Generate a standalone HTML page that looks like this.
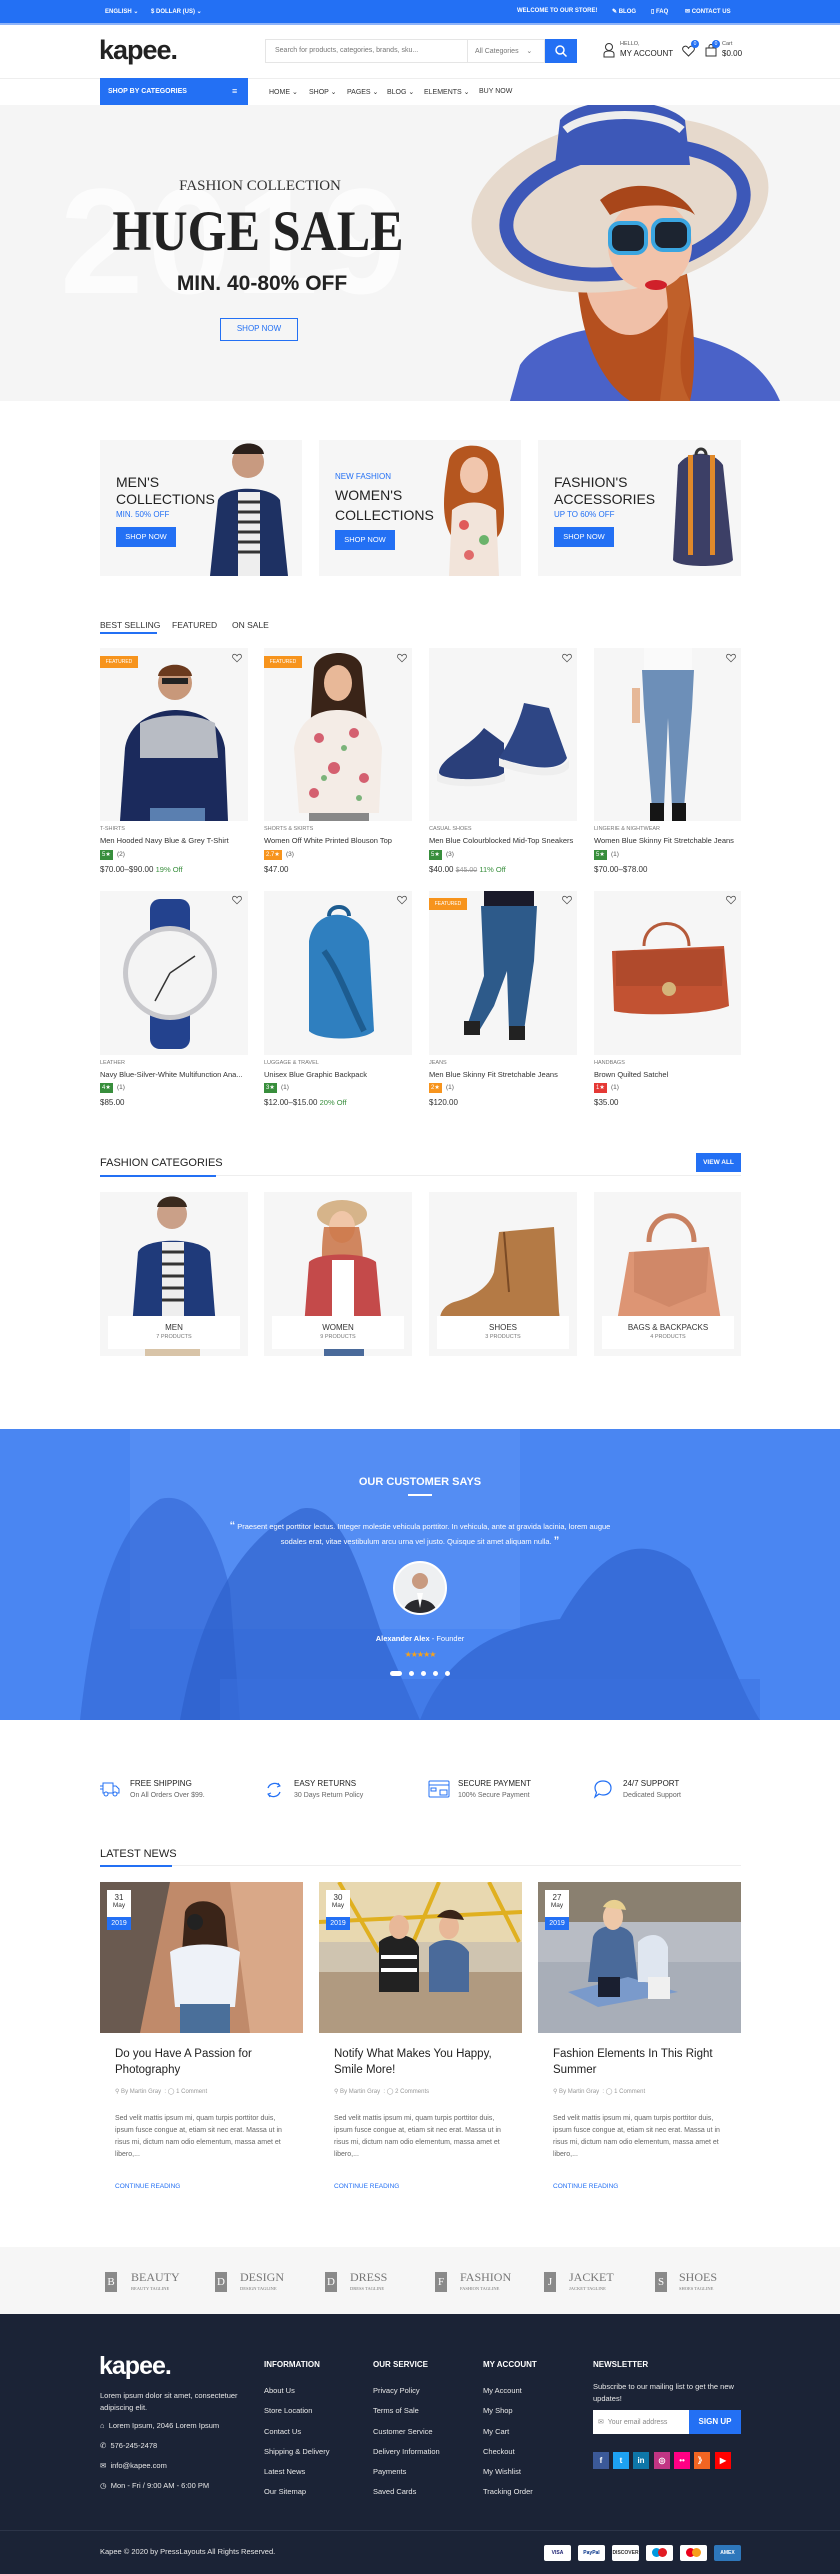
<!DOCTYPE html>
<html><head><meta charset="utf-8">
<style>
*{margin:0;padding:0;box-sizing:border-box}
body{width:840px;height:2574px;position:relative;font-family:"Liberation Sans",sans-serif;color:#333;background:#fff;overflow:hidden}
.a{position:absolute}
.blue{background:#2370f4}
.tb{font-size:6px;color:#fff;font-weight:bold;top:8px}
.nav{font-size:7px;top:88px;color:#333}
.ph{background:#f6f6f6;overflow:hidden}
.cat{font-size:5.5px;color:#777}
.nm{font-size:7.5px;color:#333;white-space:nowrap}
.rt{font-size:6px;color:#fff;padding:1px 2px;height:10px;line-height:8px}
.rc{font-size:6.5px;color:#555}
.pr{font-size:8px;color:#333}
.off{color:#388e3c;font-size:7.5px}
.heart{width:10px;height:10px}
.fh{font-size:8px;font-weight:bold;color:#fff;top:2360px}
.fl{font-size:7.5px;color:#e8e8e8}
.soc{width:16px;height:17px;top:2452px;color:#fff;font-size:8px;text-align:center;line-height:17px;font-weight:bold}
.pay{width:27px;height:16px;top:2545px;background:#fff;border-radius:2px;font-size:5px;text-align:center;line-height:16px;font-weight:bold}
.br{font-family:"Liberation Serif",serif;color:#777}
.brb{width:12px;height:20px;background:#8a8a8a;color:#fff;font-size:11px;text-align:center;line-height:20px;top:2272px;font-family:"Liberation Serif",serif}
.brt{font-size:12px;top:2270px}
.brs{font-size:4.5px;top:2286px}
.ntitle{font-size:11.5px;color:#222;line-height:16px;width:180px}
.nmeta{font-size:6px;color:#999;top:2088px}
.nex{font-size:7px;color:#666;line-height:12px;top:2113px;width:175px}
.ncr{font-size:6.5px;color:#2370f4;top:2183px}
.dt{width:24px;top:1890px;height:39px;text-align:center}
</style></head><body>

<!-- top bar -->
<div class="a blue" style="left:0;top:0;width:840px;height:23px"></div>
<div class="a" style="left:0;top:23px;width:840px;height:2px;background:#8fb4f8"></div>
<div class="a tb" style="left:105px">ENGLISH ⌄</div>
<div class="a tb" style="left:151px">$ DOLLAR (US) ⌄</div>
<div class="a tb" style="left:517px">WELCOME TO OUR STORE!</div>
<div class="a tb" style="left:612px">✎ BLOG</div>
<div class="a tb" style="left:651px">▯ FAQ</div>
<div class="a tb" style="left:685px">✉ CONTACT US</div>

<!-- header -->
<div class="a" style="left:99px;top:35px;font-size:27px;font-weight:bold;color:#222;letter-spacing:-1px">kapee.</div>
<div class="a" style="left:265px;top:39px;width:280px;height:24px;border:1px solid #e5e5e5"></div>
<div class="a" style="left:275px;top:47px;font-size:7px;color:#777">Search for products, categories, brands, sku...</div>
<div class="a" style="left:467px;top:39px;width:1px;height:24px;background:#e5e5e5"></div>
<div class="a" style="left:475px;top:47px;font-size:7px;color:#777">All Categories &nbsp;&nbsp;&nbsp;⌄</div>
<div class="a blue" style="left:545px;top:39px;width:32px;height:24px"></div>
<svg class="a" style="left:554px;top:44px" width="14" height="14" viewBox="0 0 14 14"><circle cx="6" cy="6" r="4" fill="none" stroke="#fff" stroke-width="1.5"/><line x1="9" y1="9" x2="12.5" y2="12.5" stroke="#fff" stroke-width="1.5"/></svg>
<svg class="a" style="left:603px;top:42px" width="12" height="16" viewBox="0 0 12 16"><circle cx="6" cy="5" r="3.5" fill="none" stroke="#333"/><path d="M1 15v-3c0-2 2-3 5-3s5 1 5 3v3z" fill="none" stroke="#333"/></svg>
<div class="a" style="left:620px;top:41px;font-size:5.5px;color:#555">HELLO,</div>
<div class="a" style="left:620px;top:49px;font-size:8px;color:#222">MY ACCOUNT</div>
<svg class="a" style="left:682px;top:45px" width="13" height="12" viewBox="0 0 13 12"><path d="M6.5 11L1.5 6C0 4.5 0.5 1.5 3 1.2 4.8 1 6 2.5 6.5 3.3 7 2.5 8.2 1 10 1.2 12.5 1.5 13 4.5 11.5 6z" fill="none" stroke="#333"/></svg>
<div class="a blue" style="left:691px;top:40px;width:8px;height:8px;border-radius:50%;font-size:5px;color:#fff;text-align:center;line-height:8px">0</div>
<svg class="a" style="left:705px;top:44px" width="12" height="13" viewBox="0 0 12 13"><rect x="1" y="4" width="10" height="8" fill="none" stroke="#333"/><path d="M4 4V2.5a2 2 0 014 0V4" fill="none" stroke="#333"/></svg>
<div class="a blue" style="left:712px;top:40px;width:8px;height:8px;border-radius:50%;font-size:5px;color:#fff;text-align:center;line-height:8px">0</div>
<div class="a" style="left:722px;top:41px;font-size:5.5px;color:#555">Cart</div>
<div class="a" style="left:722px;top:49px;font-size:8px;color:#222">$0.00</div>

<!-- nav -->
<div class="a" style="left:0;top:78px;width:840px;height:1px;background:#eee"></div>
<div class="a blue" style="left:100px;top:78px;width:148px;height:27px"></div>
<div class="a" style="left:108px;top:88px;font-size:7px;font-weight:bold;color:#fff">SHOP BY CATEGORIES</div>
<div class="a" style="left:232px;top:87px;font-size:9px;color:#fff;line-height:8px">≡</div>
<div class="a nav" style="left:269px">HOME ⌄</div>
<div class="a nav" style="left:309px">SHOP ⌄</div>
<div class="a nav" style="left:347px">PAGES ⌄</div>
<div class="a nav" style="left:387px">BLOG ⌄</div>
<div class="a nav" style="left:424px">ELEMENTS ⌄</div>
<div class="a nav" style="left:479px">BUY NOW</div>

<!-- hero -->
<div class="a" style="left:0;top:105px;width:840px;height:296px;background:#f5f5f5;overflow:hidden">
 <div class="a" style="left:60px;top:50px;font-family:'Liberation Sans',sans-serif;font-size:150px;font-weight:bold;color:#fcfcfc;letter-spacing:4px">2019</div>
 <div class="a" style="left:0;top:73px;width:520px;text-align:center;font-family:'Liberation Serif',serif;font-size:15px;color:#333">FASHION COLLECTION</div>
 <div class="a" style="left:0;top:97px;width:516px;text-align:center;font-family:'Liberation Serif',serif;font-size:57px;font-weight:bold;color:#222;line-height:60px;transform:scaleX(0.88);transform-origin:258px 0">HUGE SALE</div>
 <div class="a" style="left:0;top:167px;width:524px;text-align:center;font-size:21px;font-weight:bold;color:#222">MIN. 40-80% OFF</div>
 <div class="a" style="left:220px;top:213px;width:78px;height:23px;border:1.5px solid #2370f4;color:#2370f4;font-size:8px;text-align:center;line-height:20px">SHOP NOW</div>
 <svg class="a" style="left:460px;top:0" width="340" height="296" viewBox="0 0 340 296">
  <path d="M60 260 C80 230 140 215 200 225 C260 235 300 250 320 296 L50 296 Z" fill="#4a62c8"/>
  <path d="M120 130 C110 200 130 270 170 296 L230 296 C240 250 230 180 220 130Z" fill="#b5501f"/>
  <ellipse cx="170" cy="170" rx="45" ry="60" fill="#f0c0a8"/>
  <path d="M130 120 C150 150 200 160 220 130 L230 200 C220 240 215 270 230 296 L200 296 C205 250 215 200 200 160Z" fill="#c0602a"/>
  <ellipse cx="160" cy="100" rx="150" ry="85" transform="rotate(-10 160 100)" fill="#e6d9cc"/>
  <ellipse cx="165" cy="105" rx="120" ry="62" transform="rotate(-10 165 105)" fill="none" stroke="#3d58b8" stroke-width="14"/>
  <path d="M100 15 C120 -10 200 -10 225 15 L230 60 L95 60Z" fill="#3d58b8"/>
  <path d="M105 25 C130 5 200 5 222 25" fill="none" stroke="#eee" stroke-width="8"/>
  <ellipse cx="190" cy="140" rx="42" ry="45" fill="#f2c3aa"/>
  <path d="M140 95 C170 70 220 80 235 110 C225 100 180 95 150 110Z" fill="#a8461a"/>
  <rect x="150" y="118" width="36" height="30" rx="10" fill="#1c2430" stroke="#3aa5e0" stroke-width="4"/>
  <rect x="193" y="115" width="36" height="30" rx="10" fill="#1c2430" stroke="#3aa5e0" stroke-width="4"/>
  <ellipse cx="196" cy="180" rx="11" ry="5" fill="#d0202a"/>
 </svg>
</div>

<!-- banners -->
<div class="a ph" style="left:100px;top:440px;width:202px;height:136px">
 <svg class="a" style="left:100px;top:0" width="100" height="136" viewBox="0 0 100 136"><circle cx="48" cy="22" r="16" fill="#c89a80"/><path d="M32 14c4-14 30-14 32 0z" fill="#2a1f1a"/><path d="M10 136 L18 60 C25 45 70 45 80 60 L88 136Z" fill="#1e3163"/><rect x="38" y="52" width="22" height="84" fill="#eee"/><g stroke="#333" stroke-width="3"><line x1="38" y1="62" x2="60" y2="62"/><line x1="38" y1="72" x2="60" y2="72"/><line x1="38" y1="82" x2="60" y2="82"/><line x1="38" y1="92" x2="60" y2="92"/><line x1="38" y1="102" x2="60" y2="102"/><line x1="38" y1="112" x2="60" y2="112"/></g></svg>
 <div class="a" style="left:16px;top:34px;font-size:14px;color:#222;line-height:17px">MEN'S<br>COLLECTIONS</div>
 <div class="a" style="left:16px;top:70px;font-size:8px;color:#2370f4">MIN. 50% OFF</div>
 <div class="a blue" style="left:16px;top:87px;width:60px;height:20px;color:#fff;font-size:7.5px;text-align:center;line-height:20px">SHOP NOW</div>
</div>
<div class="a ph" style="left:319px;top:440px;width:202px;height:136px">
 <svg class="a" style="left:105px;top:0" width="95" height="136" viewBox="0 0 95 136"><path d="M25 20 C30 0 70 0 75 25 C80 60 85 90 70 100 L30 100 C15 80 20 50 25 20Z" fill="#b5561f"/><ellipse cx="50" cy="35" rx="14" ry="18" fill="#f1c6ad"/><path d="M28 70 C40 60 60 60 72 70 L75 136 L25 136Z" fill="#f2e4da"/><circle cx="40" cy="85" r="5" fill="#e05a5a"/><circle cx="60" cy="100" r="5" fill="#6bb36b"/><circle cx="45" cy="115" r="5" fill="#e06a6a"/></svg>
 <div class="a" style="left:16px;top:32px;font-size:8px;color:#2370f4">NEW FASHION</div>
 <div class="a" style="left:16px;top:45px;font-size:14px;color:#222;line-height:20px">WOMEN'S<br>COLLECTIONS</div>
 <div class="a blue" style="left:16px;top:90px;width:60px;height:20px;color:#fff;font-size:7.5px;text-align:center;line-height:20px">SHOP NOW</div>
</div>
<div class="a ph" style="left:538px;top:440px;width:203px;height:136px">
 <svg class="a" style="left:110px;top:0" width="93" height="136" viewBox="0 0 93 136"><path d="M30 25 C40 10 65 10 75 25 L85 120 C80 128 30 128 25 120Z" fill="#3c3f66"/><rect x="40" y="15" width="5" height="100" fill="#e0892a"/><rect x="62" y="15" width="5" height="100" fill="#e0892a"/><path d="M48 15 c0-8 10-8 10 0" fill="none" stroke="#333" stroke-width="3"/></svg>
 <div class="a" style="left:16px;top:34px;font-size:14px;color:#222;line-height:17px">FASHION'S<br>ACCESSORIES</div>
 <div class="a" style="left:16px;top:70px;font-size:8px;color:#2370f4">UP TO 60% OFF</div>
 <div class="a blue" style="left:16px;top:87px;width:60px;height:20px;color:#fff;font-size:7.5px;text-align:center;line-height:20px">SHOP NOW</div>
</div>

<!-- tabs -->
<div class="a" style="left:100px;top:620px;font-size:8.5px;color:#333">BEST SELLING</div>
<div class="a" style="left:100px;top:632px;width:57px;height:2px;background:#2370f4"></div>
<div class="a" style="left:172px;top:620px;font-size:8.5px;color:#333">FEATURED</div>
<div class="a" style="left:232px;top:620px;font-size:8.5px;color:#333">ON SALE</div>

<!-- products row 1 -->
<div class="a ph" style="left:100px;top:648px;width:148px;height:173px"><svg width="148" height="173" viewBox="0 0 148 173"><circle cx="75" cy="35" r="17" fill="#c8987a"/><path d="M58 28c2-15 32-15 34 0z" fill="#6b3a1e"/><rect x="62" y="30" width="26" height="6" fill="#222"/><path d="M20 173 L25 100 C30 70 60 62 75 62 C95 62 120 70 125 100 L128 173Z" fill="#1b2a5c"/><path d="M40 75 C60 65 95 65 115 75 L118 110 L40 110Z" fill="#b8bcc4"/><rect x="50" y="160" width="55" height="13" fill="#5a7fb0"/></svg></div>
<div class="a ph" style="left:264px;top:648px;width:148px;height:173px"><svg width="148" height="173" viewBox="0 0 148 173"><path d="M50 20 C55 0 95 0 98 20 L105 100 L45 100Z" fill="#3a2418"/><ellipse cx="74" cy="35" rx="14" ry="18" fill="#e8b898"/><path d="M30 100 C35 70 55 62 74 62 C95 62 112 70 118 100 L115 165 L35 165Z" fill="#f4ece6"/><g fill="#d46070"><circle cx="55" cy="90" r="5"/><circle cx="90" cy="85" r="5"/><circle cx="70" cy="120" r="6"/><circle cx="100" cy="130" r="5"/><circle cx="50" cy="145" r="5"/></g><g fill="#7bb37a"><circle cx="80" cy="100" r="3"/><circle cx="60" cy="130" r="3"/><circle cx="95" cy="150" r="3"/></g><rect x="45" y="165" width="60" height="8" fill="#888"/></svg></div>
<div class="a ph" style="left:429px;top:648px;width:148px;height:173px"><svg width="148" height="173" viewBox="0 0 148 173"><path d="M10 125 C10 110 40 100 55 80 L75 95 L75 125 C60 135 20 138 10 125Z" fill="#2a3f7a"/><path d="M8 125 C20 134 60 132 76 126 L76 133 C60 140 20 140 8 133Z" fill="#eee"/><path d="M70 110 C80 95 90 75 95 55 L120 60 L138 110 C130 125 100 120 70 110Z" fill="#2e4685"/><path d="M70 110 C100 122 130 125 140 112 L140 120 C130 132 100 128 70 118Z" fill="#eee"/></svg></div>
<div class="a ph" style="left:594px;top:648px;width:147px;height:173px"><svg width="147" height="173" viewBox="0 0 147 173"><rect x="50" y="0" width="48" height="22" fill="#fafafa"/><path d="M48 22 L100 22 L98 60 L90 160 L78 160 L74 70 L70 160 L58 160 L50 60Z" fill="#6d8fb8"/><rect x="56" y="155" width="14" height="18" fill="#151515"/><rect x="78" y="155" width="14" height="18" fill="#151515"/><rect x="38" y="40" width="8" height="35" fill="#e6b898"/></svg></div>

<svg class="a heart" style="left:232px;top:653px" viewBox="0 0 13 12"><path d="M6.5 11L1.5 6C0 4.5 0.5 1.5 3 1.2 4.8 1 6 2.5 6.5 3.3 7 2.5 8.2 1 10 1.2 12.5 1.5 13 4.5 11.5 6z" fill="none" stroke="#555"/></svg>
<svg class="a heart" style="left:397px;top:653px" viewBox="0 0 13 12"><path d="M6.5 11L1.5 6C0 4.5 0.5 1.5 3 1.2 4.8 1 6 2.5 6.5 3.3 7 2.5 8.2 1 10 1.2 12.5 1.5 13 4.5 11.5 6z" fill="none" stroke="#555"/></svg>
<svg class="a heart" style="left:562px;top:653px" viewBox="0 0 13 12"><path d="M6.5 11L1.5 6C0 4.5 0.5 1.5 3 1.2 4.8 1 6 2.5 6.5 3.3 7 2.5 8.2 1 10 1.2 12.5 1.5 13 4.5 11.5 6z" fill="none" stroke="#555"/></svg>
<svg class="a heart" style="left:726px;top:653px" viewBox="0 0 13 12"><path d="M6.5 11L1.5 6C0 4.5 0.5 1.5 3 1.2 4.8 1 6 2.5 6.5 3.3 7 2.5 8.2 1 10 1.2 12.5 1.5 13 4.5 11.5 6z" fill="none" stroke="#555"/></svg>
<div class="a" style="left:100px;top:656px;width:38px;height:12px;background:#f7941d;color:#fff;font-size:5px;text-align:center;line-height:12px">FEATURED</div>
<div class="a" style="left:264px;top:656px;width:38px;height:12px;background:#f7941d;color:#fff;font-size:5px;text-align:center;line-height:12px">FEATURED</div>

<div class="a cat" style="left:100px;top:826px">T-SHIRTS</div>
<div class="a cat" style="left:264px;top:826px">SHORTS &amp; SKIRTS</div>
<div class="a cat" style="left:429px;top:826px">CASUAL SHOES</div>
<div class="a cat" style="left:594px;top:826px">LINGERIE &amp; NIGHTWEAR</div>
<div class="a nm" style="left:100px;top:836px">Men Hooded Navy Blue &amp; Grey T-Shirt</div>
<div class="a nm" style="left:264px;top:836px">Women Off White Printed Blouson Top</div>
<div class="a nm" style="left:429px;top:836px">Men Blue Colourblocked Mid-Top Sneakers</div>
<div class="a nm" style="left:594px;top:836px">Women Blue Skinny Fit Stretchable Jeans</div>
<div class="a rt" style="left:100px;top:850px;background:#388e3c">5★</div><div class="a rc" style="left:117px;top:851px">(2)</div>
<div class="a rt" style="left:264px;top:850px;background:#f7941d">2.7★</div><div class="a rc" style="left:286px;top:851px">(3)</div>
<div class="a rt" style="left:429px;top:850px;background:#388e3c">5★</div><div class="a rc" style="left:446px;top:851px">(3)</div>
<div class="a rt" style="left:594px;top:850px;background:#388e3c">5★</div><div class="a rc" style="left:611px;top:851px">(1)</div>
<div class="a pr" style="left:100px;top:865px">$70.00–$90.00 <span class="off">19% Off</span></div>
<div class="a pr" style="left:264px;top:865px">$47.00</div>
<div class="a pr" style="left:429px;top:865px">$40.00 <s style="color:#999;font-size:7px">$45.00</s> <span class="off">11% Off</span></div>
<div class="a pr" style="left:594px;top:865px">$70.00–$78.00</div>

<!-- products row 2 -->
<div class="a ph" style="left:100px;top:891px;width:148px;height:164px"><svg width="148" height="164" viewBox="0 0 148 164"><rect x="50" y="8" width="40" height="150" rx="10" fill="#23428e"/><circle cx="70" cy="82" r="47" fill="#c8c8cc"/><circle cx="70" cy="82" r="42" fill="#f4f4f4"/><line x1="70" y1="82" x2="55" y2="110" stroke="#333" stroke-width="1.5"/><line x1="70" y1="82" x2="95" y2="65" stroke="#333" stroke-width="1.5"/></svg></div>
<div class="a ph" style="left:264px;top:891px;width:148px;height:164px"><svg width="148" height="164" viewBox="0 0 148 164"><path d="M45 50 C50 15 95 15 105 50 L110 140 C100 150 55 150 45 140Z" fill="#2f7fbf"/><path d="M60 60 C75 80 85 110 100 140" stroke="#1d5c90" stroke-width="6" fill="none"/><path d="M65 25 c0-12 20-12 20 0" fill="none" stroke="#1d5c90" stroke-width="4"/></svg></div>
<div class="a ph" style="left:429px;top:891px;width:148px;height:164px"><svg width="148" height="164" viewBox="0 0 148 164"><rect x="55" y="0" width="50" height="20" fill="#1a1a2a"/><path d="M52 15 L108 15 L105 70 L95 140 L80 140 L78 80 L65 115 L50 140 L38 135 L55 85Z" fill="#2d5a8a"/><rect x="35" y="130" width="16" height="14" fill="#222"/><rect x="80" y="135" width="16" height="14" fill="#222"/></svg></div>
<div class="a ph" style="left:594px;top:891px;width:147px;height:164px"><svg width="147" height="164" viewBox="0 0 147 164"><path d="M50 55 c0-30 45-30 45 0" fill="none" stroke="#b55a3a" stroke-width="3"/><path d="M18 60 L130 55 L135 115 C110 125 40 125 20 120Z" fill="#c25232"/><path d="M22 60 L130 58 L128 95 L22 95Z" fill="#b04a2c"/><circle cx="75" cy="98" r="7" fill="#d4b47a"/></svg></div>
<svg class="a heart" style="left:232px;top:895px" viewBox="0 0 13 12"><path d="M6.5 11L1.5 6C0 4.5 0.5 1.5 3 1.2 4.8 1 6 2.5 6.5 3.3 7 2.5 8.2 1 10 1.2 12.5 1.5 13 4.5 11.5 6z" fill="none" stroke="#555"/></svg>
<svg class="a heart" style="left:397px;top:895px" viewBox="0 0 13 12"><path d="M6.5 11L1.5 6C0 4.5 0.5 1.5 3 1.2 4.8 1 6 2.5 6.5 3.3 7 2.5 8.2 1 10 1.2 12.5 1.5 13 4.5 11.5 6z" fill="none" stroke="#555"/></svg>
<svg class="a heart" style="left:562px;top:895px" viewBox="0 0 13 12"><path d="M6.5 11L1.5 6C0 4.5 0.5 1.5 3 1.2 4.8 1 6 2.5 6.5 3.3 7 2.5 8.2 1 10 1.2 12.5 1.5 13 4.5 11.5 6z" fill="none" stroke="#555"/></svg>
<svg class="a heart" style="left:726px;top:895px" viewBox="0 0 13 12"><path d="M6.5 11L1.5 6C0 4.5 0.5 1.5 3 1.2 4.8 1 6 2.5 6.5 3.3 7 2.5 8.2 1 10 1.2 12.5 1.5 13 4.5 11.5 6z" fill="none" stroke="#555"/></svg>
<div class="a" style="left:429px;top:898px;width:38px;height:12px;background:#f7941d;color:#fff;font-size:5px;text-align:center;line-height:12px">FEATURED</div>

<div class="a cat" style="left:100px;top:1060px">LEATHER</div>
<div class="a cat" style="left:264px;top:1060px">LUGGAGE &amp; TRAVEL</div>
<div class="a cat" style="left:429px;top:1060px">JEANS</div>
<div class="a cat" style="left:594px;top:1060px">HANDBAGS</div>
<div class="a nm" style="left:100px;top:1070px">Navy Blue-Silver-White Multifunction Ana...</div>
<div class="a nm" style="left:264px;top:1070px">Unisex Blue Graphic Backpack</div>
<div class="a nm" style="left:429px;top:1070px">Men Blue Skinny Fit Stretchable Jeans</div>
<div class="a nm" style="left:594px;top:1070px">Brown Quilted Satchel</div>
<div class="a rt" style="left:100px;top:1083px;background:#388e3c">4★</div><div class="a rc" style="left:117px;top:1084px">(1)</div>
<div class="a rt" style="left:264px;top:1083px;background:#388e3c">3★</div><div class="a rc" style="left:281px;top:1084px">(1)</div>
<div class="a rt" style="left:429px;top:1083px;background:#f7941d">2★</div><div class="a rc" style="left:446px;top:1084px">(1)</div>
<div class="a rt" style="left:594px;top:1083px;background:#e53935">1★</div><div class="a rc" style="left:611px;top:1084px">(1)</div>
<div class="a pr" style="left:100px;top:1098px">$85.00</div>
<div class="a pr" style="left:264px;top:1098px">$12.00–$15.00 <span class="off">20% Off</span></div>
<div class="a pr" style="left:429px;top:1098px">$120.00</div>
<div class="a pr" style="left:594px;top:1098px">$35.00</div>

<!-- fashion categories -->
<div class="a" style="left:100px;top:1157px;font-size:11px;color:#222">FASHION CATEGORIES</div>
<div class="a" style="left:100px;top:1175px;width:641px;height:1px;background:#eee"></div>
<div class="a" style="left:100px;top:1175px;width:116px;height:2px;background:#2370f4"></div>
<div class="a blue" style="left:696px;top:1153px;width:45px;height:19px;color:#fff;font-size:6.5px;font-weight:bold;text-align:center;line-height:19px">VIEW ALL</div>

<div class="a ph" style="left:100px;top:1192px;width:148px;height:164px"><svg width="148" height="164" viewBox="0 0 148 164"><circle cx="72" cy="22" r="15" fill="#caa088"/><path d="M57 15c2-14 28-14 30 0z" fill="#3a2a1e"/><path d="M32 135 L38 60 C45 45 100 45 110 60 L116 135Z" fill="#1f3a7a"/><rect x="62" y="50" width="22" height="85" fill="#eee"/><g stroke="#333" stroke-width="3"><line x1="62" y1="60" x2="84" y2="60"/><line x1="62" y1="72" x2="84" y2="72"/><line x1="62" y1="84" x2="84" y2="84"/><line x1="62" y1="96" x2="84" y2="96"/><line x1="62" y1="108" x2="84" y2="108"/></g><rect x="45" y="135" width="55" height="29" fill="#d8c4a8"/></svg></div>
<div class="a ph" style="left:264px;top:1192px;width:148px;height:164px"><svg width="148" height="164" viewBox="0 0 148 164"><ellipse cx="78" cy="22" rx="25" ry="14" fill="#d6b48a"/><ellipse cx="78" cy="35" rx="13" ry="16" fill="#f0c6a8"/><path d="M60 35 C55 70 60 90 65 95 L95 95 C100 80 100 60 95 35Z" fill="#c76a3a" opacity=".8"/><path d="M40 135 L45 70 C55 60 100 60 112 70 L118 135Z" fill="#c44a4a"/><rect x="68" y="68" width="22" height="60" fill="#fff"/><rect x="60" y="135" width="40" height="29" fill="#4a6a9a"/></svg></div>
<div class="a ph" style="left:429px;top:1192px;width:148px;height:164px"><svg width="148" height="164" viewBox="0 0 148 164"><path d="M70 40 L125 35 L130 120 C132 130 128 135 120 135 L15 135 C8 130 10 115 25 110 C45 105 60 95 65 80Z" fill="#b47a45"/><rect x="10" y="128" width="122" height="8" fill="#6a4a30"/><path d="M75 40 L80 100" stroke="#7a4a25" stroke-width="2"/></svg></div>
<div class="a ph" style="left:594px;top:1192px;width:147px;height:164px"><svg width="147" height="164" viewBox="0 0 147 164"><path d="M55 50 C55 15 100 15 100 50" fill="none" stroke="#c88060" stroke-width="5"/><path d="M35 60 L115 55 L128 135 L22 135Z" fill="#dd9574"/><path d="M40 60 L115 55 L112 100 L75 115 L40 100Z" fill="#d08868"/></svg></div>
<div class="a" style="left:108px;top:1316px;width:132px;height:33px;background:#fff;text-align:center"><div style="font-size:8px;margin-top:7px">MEN</div><div style="font-size:5.5px;color:#777;margin-top:2px">7 PRODUCTS</div></div>
<div class="a" style="left:272px;top:1316px;width:132px;height:33px;background:#fff;text-align:center"><div style="font-size:8px;margin-top:7px">WOMEN</div><div style="font-size:5.5px;color:#777;margin-top:2px">9 PRODUCTS</div></div>
<div class="a" style="left:437px;top:1316px;width:132px;height:33px;background:#fff;text-align:center"><div style="font-size:8px;margin-top:7px">SHOES</div><div style="font-size:5.5px;color:#777;margin-top:2px">3 PRODUCTS</div></div>
<div class="a" style="left:602px;top:1316px;width:132px;height:33px;background:#fff;text-align:center"><div style="font-size:8px;margin-top:7px">BAGS &amp; BACKPACKS</div><div style="font-size:5.5px;color:#777;margin-top:2px">4 PRODUCTS</div></div>

<!-- testimonial -->
<div class="a" style="left:0;top:1429px;width:840px;height:291px;background:#4a86f2;overflow:hidden">
 <svg width="840" height="291" viewBox="0 0 840 291">
  <rect x="0" y="0" width="840" height="291" fill="#4a86f2"/>
  <rect x="130" y="0" width="390" height="200" fill="#5b92f3" opacity=".6"/>
  <path d="M80 291 C90 200 110 100 160 70 C200 60 220 120 230 160 L240 291Z" fill="#2f63d0" opacity=".55"/>
  <path d="M180 291 C200 180 240 110 300 80 C340 70 360 140 380 200 L420 291Z" fill="#2c5ec8" opacity=".6"/>
  <path d="M420 291 C440 240 480 200 560 190 C600 120 640 100 690 140 C720 200 740 260 760 291Z" fill="#2c5ec8" opacity=".6"/>
  <rect x="220" y="250" width="540" height="41" fill="#3a70de" opacity=".5"/>
 </svg>
</div>
<div class="a" style="left:0;top:1476px;width:840px;text-align:center;font-size:11px;font-weight:bold;color:#fff">OUR CUSTOMER SAYS</div>
<div class="a" style="left:408px;top:1494px;width:24px;height:2px;background:#fff"></div>
<div class="a" style="left:0;top:1519px;width:840px;text-align:center;font-size:7.5px;color:#fff;line-height:15px"><b style="font-size:11px">“</b> Praesent eget porttitor lectus. Integer molestie vehicula porttitor. In vehicula, ante at gravida lacinia, lorem augue<br>sodales erat, vitae vestibulum arcu urna vel justo. Quisque sit amet aliquam nulla. <b style="font-size:11px">”</b></div>
<div class="a" style="left:393px;top:1561px;width:54px;height:54px;border-radius:50%;background:#fff;overflow:hidden;border:2px solid #fff"><svg width="50" height="50" viewBox="0 0 50 50"><rect width="50" height="50" fill="#eef0f2"/><circle cx="25" cy="18" r="8" fill="#c89a80"/><path d="M8 50 C10 32 40 32 42 50Z" fill="#2a2a2e"/><path d="M22 30 L25 45 L28 30Z" fill="#fff"/></svg></div>
<div class="a" style="left:0;top:1634px;width:840px;text-align:center;font-size:7.5px;color:#fff"><b>Alexander Alex</b> - Founder</div>
<div class="a" style="left:0;top:1650px;width:840px;text-align:center;font-size:8px;color:#f7a21b;letter-spacing:-1px">★★★★★</div>
<div class="a" style="left:390px;top:1671px;width:12px;height:5px;border-radius:3px;background:#fff"></div>
<div class="a" style="left:409px;top:1671px;width:5px;height:5px;border-radius:50%;background:#fff"></div>
<div class="a" style="left:421px;top:1671px;width:5px;height:5px;border-radius:50%;background:#fff"></div>
<div class="a" style="left:433px;top:1671px;width:5px;height:5px;border-radius:50%;background:#fff"></div>
<div class="a" style="left:445px;top:1671px;width:5px;height:5px;border-radius:50%;background:#fff"></div>

<!-- features -->
<svg class="a" style="left:100px;top:1780px" width="20" height="18" viewBox="0 0 20 18"><rect x="3" y="3" width="10" height="10" fill="none" stroke="#2370f4"/><path d="M13 6h3l3 3v4h-6" fill="none" stroke="#2370f4"/><circle cx="6" cy="14" r="2" fill="#fff" stroke="#2370f4"/><circle cx="15" cy="14" r="2" fill="#fff" stroke="#2370f4"/><line x1="0" y1="6" x2="3" y2="6" stroke="#2370f4"/><line x1="0" y1="9" x2="3" y2="9" stroke="#2370f4"/></svg>
<svg class="a" style="left:264px;top:1780px" width="20" height="20" viewBox="0 0 20 20"><path d="M4 8 A7 7 0 0 1 16 6" fill="none" stroke="#2370f4" stroke-width="1.3"/><path d="M16 12 A7 7 0 0 1 4 14" fill="none" stroke="#2370f4" stroke-width="1.3"/><path d="M14 3 l2 3 -3 1" fill="none" stroke="#2370f4"/><path d="M6 17 l-2 -3 3 -1" fill="none" stroke="#2370f4"/></svg>
<svg class="a" style="left:428px;top:1780px" width="22" height="18" viewBox="0 0 22 18"><rect x="1" y="1" width="20" height="16" rx="1" fill="none" stroke="#2370f4"/><line x1="1" y1="5" x2="21" y2="5" stroke="#2370f4"/><rect x="3" y="8" width="5" height="3" fill="none" stroke="#2370f4"/><rect x="12" y="10" width="7" height="5" fill="none" stroke="#2370f4"/></svg>
<svg class="a" style="left:593px;top:1779px" width="20" height="20" viewBox="0 0 20 20"><path d="M10 2 C15 2 18 5 18 9 C18 13 15 16 10 16 C8 16 7 15.5 6 15 L2 18 L3.5 13.5 C2.5 12 2 10.5 2 9 C2 5 5 2 10 2Z" fill="none" stroke="#2370f4" stroke-width="1.2"/></svg>
<div class="a" style="left:130px;top:1779px;font-size:8px;color:#222">FREE SHIPPING</div>
<div class="a" style="left:130px;top:1792px;font-size:7px;color:#666">On All Orders Over $99.</div>
<div class="a" style="left:294px;top:1779px;font-size:8px;color:#222">EASY RETURNS</div>
<div class="a" style="left:294px;top:1792px;font-size:7px;color:#666">30 Days Return Policy</div>
<div class="a" style="left:458px;top:1779px;font-size:8px;color:#222">SECURE PAYMENT</div>
<div class="a" style="left:458px;top:1792px;font-size:7px;color:#666">100% Secure Payment</div>
<div class="a" style="left:623px;top:1779px;font-size:8px;color:#222">24/7 SUPPORT</div>
<div class="a" style="left:623px;top:1792px;font-size:7px;color:#666">Dedicated Support</div>

<!-- latest news -->
<div class="a" style="left:100px;top:1848px;font-size:11px;color:#222">LATEST NEWS</div>
<div class="a" style="left:100px;top:1865px;width:641px;height:1px;background:#eee"></div>
<div class="a" style="left:100px;top:1865px;width:72px;height:2px;background:#2370f4"></div>

<div class="a" style="left:100px;top:1882px;width:203px;height:151px;overflow:hidden"><svg width="203" height="151" viewBox="0 0 203 151"><rect width="203" height="151" fill="#c08a6a"/><path d="M0 0 L70 0 L40 151 L0 151Z" fill="#6a5a50"/><path d="M130 0 L203 0 L203 151 L150 151Z" fill="#d9a888"/><ellipse cx="105" cy="40" rx="16" ry="20" fill="#f0c4a8"/><path d="M85 30 C90 15 120 15 125 35 L128 70 L82 70Z" fill="#3a2418"/><path d="M70 70 C85 60 125 60 140 70 L135 125 L75 125Z" fill="#eef2f8"/><rect x="80" y="122" width="50" height="29" fill="#4a6f9a"/><circle cx="95" cy="40" r="8" fill="#222"/></svg></div>
<div class="a" style="left:319px;top:1882px;width:203px;height:151px;overflow:hidden"><svg width="203" height="151" viewBox="0 0 203 151"><rect width="203" height="151" fill="#cfc4b0"/><rect x="0" y="0" width="203" height="60" fill="#e8d8b0"/><g stroke="#e0b020" stroke-width="4" fill="none"><path d="M0 40 L203 30"/><path d="M20 0 L60 70"/><path d="M120 0 L90 70"/><path d="M170 0 L200 60"/></g><rect x="0" y="90" width="203" height="61" fill="#b09a80"/><path d="M60 60 C70 50 95 50 100 65 L100 110 L60 110Z" fill="#222"/><g stroke="#fff" stroke-width="4"><line x1="62" y1="75" x2="98" y2="75"/><line x1="62" y1="88" x2="98" y2="88"/></g><ellipse cx="80" cy="45" rx="10" ry="12" fill="#e8b898"/><path d="M110 65 C120 55 140 55 150 70 L150 110 L110 110Z" fill="#4a6a9a"/><ellipse cx="130" cy="45" rx="10" ry="12" fill="#e8b898"/><path d="M118 35 C125 25 140 25 145 38Z" fill="#3a2418"/></svg></div>
<div class="a" style="left:538px;top:1882px;width:203px;height:151px;overflow:hidden"><svg width="203" height="151" viewBox="0 0 203 151"><rect width="203" height="151" fill="#b8bcc4"/><rect x="0" y="0" width="203" height="40" fill="#8a8070"/><rect x="0" y="80" width="203" height="71" fill="#a8aeb8"/><path d="M55 55 C60 40 90 40 95 55 L100 100 L50 100Z" fill="#4a6a9a"/><ellipse cx="75" cy="35" rx="10" ry="13" fill="#eec8a8"/><path d="M65 25 C70 15 85 15 88 28Z" fill="#e8d090"/><path d="M30 110 L90 95 L140 110 L60 125Z" fill="#7a9acb"/><path d="M100 60 C110 50 125 50 130 65 L130 100 L100 100Z" fill="#dfe6f0"/><rect x="60" y="95" width="22" height="20" fill="#1a1f30"/><rect x="110" y="95" width="22" height="22" fill="#f0f0f0"/></svg></div>
<div class="a dt" style="left:107px;background:#fff"><div style="font-size:8px;margin-top:3px">31</div><div style="font-size:6.5px">May</div></div>
<div class="a blue" style="left:107px;top:1917px;width:24px;height:13px;color:#fff;font-size:7px;text-align:center;line-height:13px">2019</div>
<div class="a dt" style="left:326px;background:#fff"><div style="font-size:8px;margin-top:3px">30</div><div style="font-size:6.5px">May</div></div>
<div class="a blue" style="left:326px;top:1917px;width:24px;height:13px;color:#fff;font-size:7px;text-align:center;line-height:13px">2019</div>
<div class="a dt" style="left:545px;background:#fff"><div style="font-size:8px;margin-top:3px">27</div><div style="font-size:6.5px">May</div></div>
<div class="a blue" style="left:545px;top:1917px;width:24px;height:13px;color:#fff;font-size:7px;text-align:center;line-height:13px">2019</div>

<div class="a ntitle" style="left:115px;top:2046px">Do you Have A Passion for Photography</div>
<div class="a ntitle" style="left:334px;top:2046px">Notify What Makes You Happy, Smile More!</div>
<div class="a ntitle" style="left:553px;top:2046px">Fashion Elements In This Right Summer</div>
<div class="a nmeta" style="left:115px">⚲ By Martin Gray &nbsp;: ◯ 1 Comment</div>
<div class="a nmeta" style="left:334px">⚲ By Martin Gray &nbsp;: ◯ 2 Comments</div>
<div class="a nmeta" style="left:553px">⚲ By Martin Gray &nbsp;: ◯ 1 Comment</div>
<div class="a nex" style="left:115px">Sed velit mattis ipsum mi, quam turpis porttitor duis, ipsum fusce congue at, etiam sit nec erat. Massa ut in risus mi, dictum nam odio elementum, massa amet et libero,...</div>
<div class="a nex" style="left:334px">Sed velit mattis ipsum mi, quam turpis porttitor duis, ipsum fusce congue at, etiam sit nec erat. Massa ut in risus mi, dictum nam odio elementum, massa amet et libero,...</div>
<div class="a nex" style="left:553px">Sed velit mattis ipsum mi, quam turpis porttitor duis, ipsum fusce congue at, etiam sit nec erat. Massa ut in risus mi, dictum nam odio elementum, massa amet et libero,...</div>
<div class="a ncr" style="left:115px">CONTINUE READING</div>
<div class="a ncr" style="left:334px">CONTINUE READING</div>
<div class="a ncr" style="left:553px">CONTINUE READING</div>

<!-- brands -->
<div class="a" style="left:0;top:2247px;width:840px;height:67px;background:#f6f6f6"></div>
<div class="a brb" style="left:105px">B</div><div class="a br brt" style="left:131px">BEAUTY</div><div class="a br brs" style="left:131px">BEAUTY TAGLINE</div>
<div class="a brb" style="left:215px">D</div><div class="a br brt" style="left:240px">DESIGN</div><div class="a br brs" style="left:240px">DESIGN TAGLINE</div>
<div class="a brb" style="left:325px">D</div><div class="a br brt" style="left:350px">DRESS</div><div class="a br brs" style="left:350px">DRESS TAGLINE</div>
<div class="a brb" style="left:435px">F</div><div class="a br brt" style="left:460px">FASHION</div><div class="a br brs" style="left:460px">FASHION TAGLINE</div>
<div class="a brb" style="left:544px">J</div><div class="a br brt" style="left:569px">JACKET</div><div class="a br brs" style="left:569px">JACKET TAGLINE</div>
<div class="a brb" style="left:655px">S</div><div class="a br brt" style="left:679px">SHOES</div><div class="a br brs" style="left:679px">SHOES TAGLINE</div>

<!-- footer -->
<div class="a" style="left:0;top:2314px;width:840px;height:260px;background:#1b2336"></div>
<div class="a" style="left:99px;top:2352px;font-size:25px;font-weight:bold;color:#fff;letter-spacing:-1px">kapee.</div>
<div class="a fl" style="left:100px;top:2390px;line-height:12px;width:150px">Lorem ipsum dolor sit amet, consectetuer adipiscing elit.</div>
<div class="a fl" style="left:100px;top:2421px">⌂ &nbsp;Lorem Ipsum, 2046 Lorem Ipsum</div>
<div class="a fl" style="left:100px;top:2441px">✆ &nbsp;576-245-2478</div>
<div class="a fl" style="left:100px;top:2461px">✉ &nbsp;info@kapee.com</div>
<div class="a fl" style="left:100px;top:2481px">◷ &nbsp;Mon - Fri / 9:00 AM - 6:00 PM</div>

<div class="a fh" style="left:264px">INFORMATION</div>
<div class="a fh" style="left:373px">OUR SERVICE</div>
<div class="a fh" style="left:483px">MY ACCOUNT</div>
<div class="a fh" style="left:593px">NEWSLETTER</div>
<div class="a fl" style="left:264px;top:2381px;line-height:20.3px">About Us<br>Store Location<br>Contact Us<br>Shipping &amp; Delivery<br>Latest News<br>Our Sitemap</div>
<div class="a fl" style="left:373px;top:2381px;line-height:20.3px">Privacy Policy<br>Terms of Sale<br>Customer Service<br>Delivery Information<br>Payments<br>Saved Cards</div>
<div class="a fl" style="left:483px;top:2381px;line-height:20.3px">My Account<br>My Shop<br>My Cart<br>Checkout<br>My Wishlist<br>Tracking Order</div>
<div class="a fl" style="left:593px;top:2381px;line-height:12px;width:150px">Subscribe to our mailing list to get the new updates!</div>
<div class="a" style="left:593px;top:2410px;width:96px;height:24px;background:#fff"></div>
<div class="a" style="left:598px;top:2418px;font-size:7px;color:#888">✉ &nbsp;Your email address</div>
<div class="a blue" style="left:689px;top:2410px;width:52px;height:24px;color:#fff;font-size:8px;font-weight:bold;text-align:center;line-height:24px">SIGN UP</div>
<div class="a soc" style="left:593px;background:#3b5998">f</div>
<div class="a soc" style="left:613px;background:#1da1f2">t</div>
<div class="a soc" style="left:633px;background:#0e76a8">in</div>
<div class="a soc" style="left:654px;background:#c13584">◎</div>
<div class="a soc" style="left:674px;background:#ff0084">••</div>
<div class="a soc" style="left:694px;background:#f26522">》</div>
<div class="a soc" style="left:715px;background:#ff0000">▶</div>
<div class="a" style="left:0;top:2530px;width:840px;height:1px;background:#2c3448"></div>
<div class="a" style="left:100px;top:2547px;font-size:7.5px;color:#e8e8e8">Kapee © 2020 by PressLayouts All Rights Reserved.</div>
<div class="a pay" style="left:544px;color:#1a1f71">VISA</div>
<div class="a pay" style="left:578px;color:#003087">PayPal</div>
<div class="a pay" style="left:612px;color:#333">DISCOVER</div>
<div class="a pay" style="left:646px"><span style="display:inline-block;width:9px;height:9px;border-radius:50%;background:#0099df;margin-top:3px"></span><span style="display:inline-block;width:9px;height:9px;border-radius:50%;background:#e21b23;margin-left:-3px"></span></div>
<div class="a pay" style="left:680px"><span style="display:inline-block;width:9px;height:9px;border-radius:50%;background:#eb001b;margin-top:3px"></span><span style="display:inline-block;width:9px;height:9px;border-radius:50%;background:#f79e1b;margin-left:-3px"></span></div>
<div class="a pay" style="left:714px;background:#2e77bb;color:#fff">AMEX</div>
</body></html>
